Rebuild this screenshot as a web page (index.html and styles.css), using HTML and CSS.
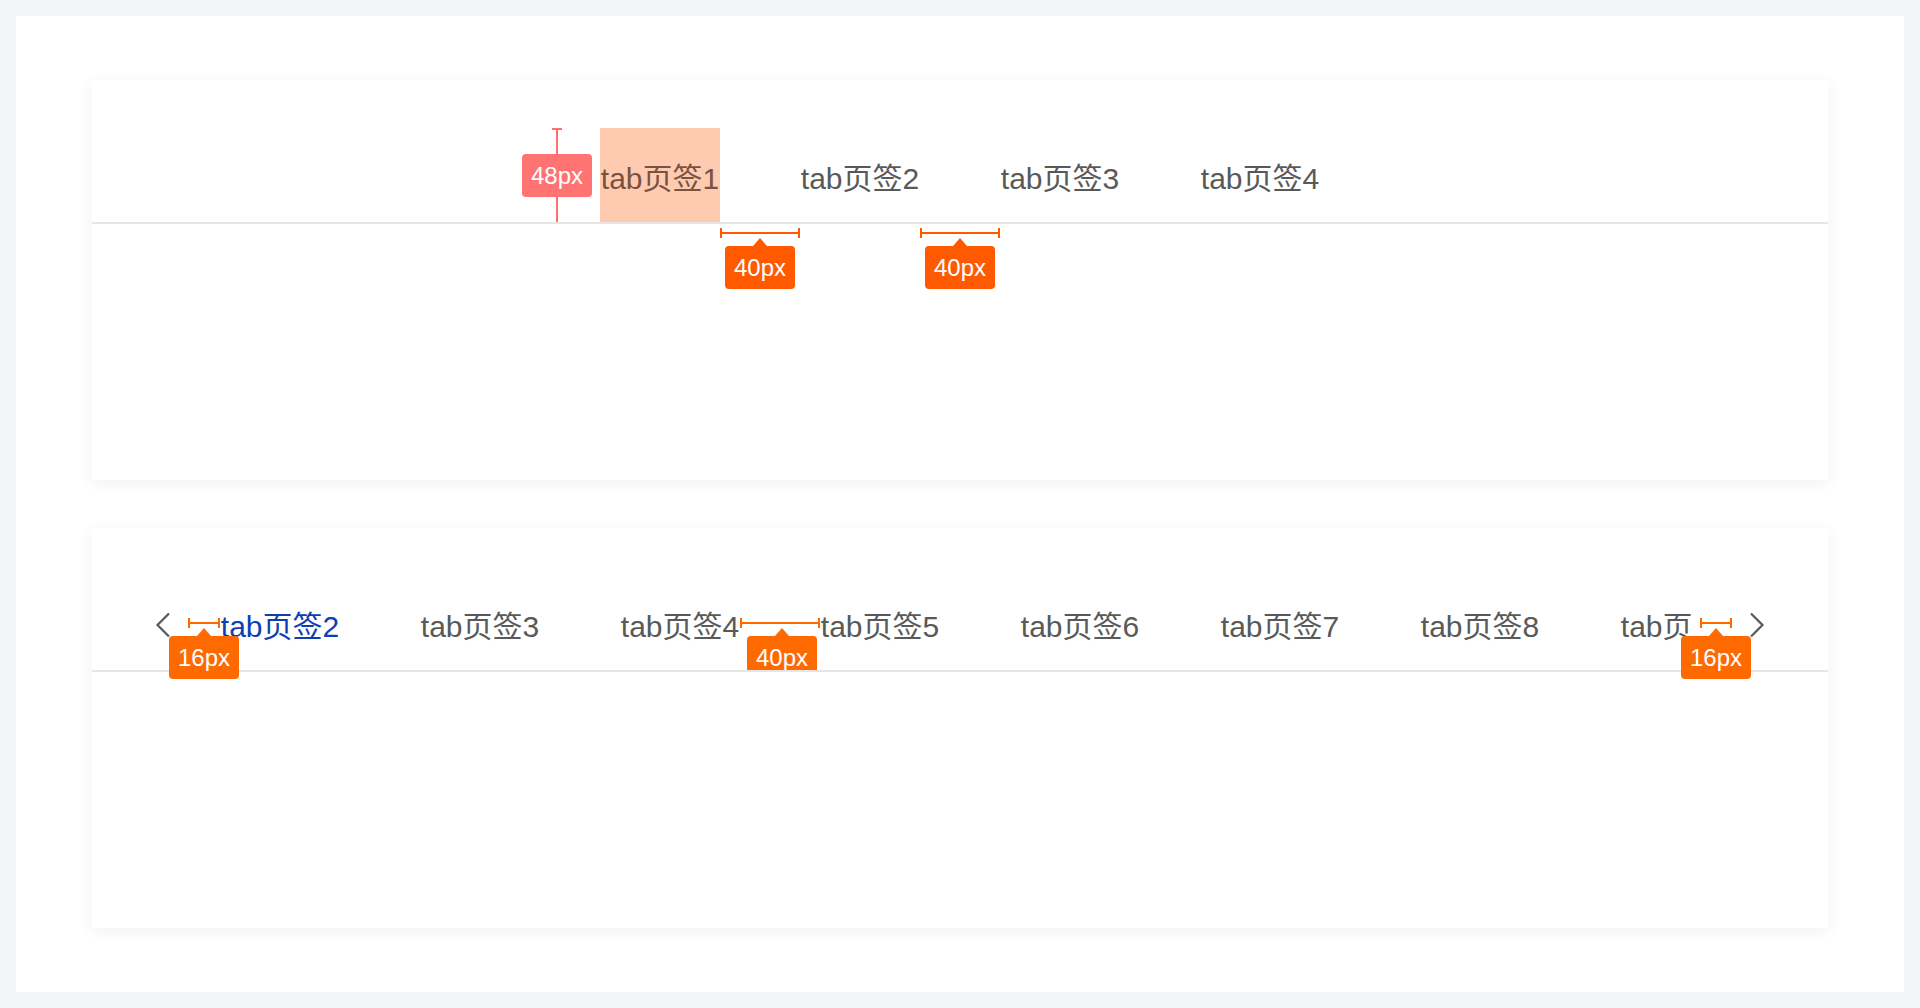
FILE: index.html
```html
<!DOCTYPE html>
<html lang="zh-CN">
<head>
<meta charset="utf-8">
<title>Tabs spec</title>
<link rel="stylesheet" href="styles.css">
</head>
<body>
<div class="page">
  <section class="card">
    <div class="tabbar tabbar-center">
      <div class="tabs">
        <div class="tab tab-hl">tab页签1
          <span class="vmark"></span>
          <span class="badge badge-red b48">48px</span>
          <span class="hmark hmark-o1 gap-mark"></span>
          <span class="badge badge-o1 gap-badge">40px</span>
        </div>
        <div class="tab">tab页签2
          <span class="hmark hmark-o1 gap-mark"></span>
          <span class="badge badge-o1 gap-badge">40px</span>
        </div>
        <div class="tab">tab页签3</div>
        <div class="tab">tab页签4</div>
      </div>
    </div>
  </section>

  <section class="card">
    <div class="tabbar tabbar-scroll">
      <div class="arrow arrow-left">
        <svg width="16" height="26" viewBox="0 0 16 26"><path d="M14 1.5 L2.5 13 L14 24.5" fill="none" stroke="#595959" stroke-width="2.2"/></svg>
        <span class="hmark hmark-o2 edge-mark-left"></span>
        <span class="badge badge-o2 edge-badge-left">16px</span>
      </div>
      <div class="viewport">
        <div class="tabs">
          <div class="tab tab-active">tab页签2</div>
          <div class="tab">tab页签3</div>
          <div class="tab">tab页签4
            <span class="hmark hmark-o2 gap-mark2"></span>
            <span class="badge badge-o2 gap-badge2">40px</span>
          </div>
          <div class="tab">tab页签5</div>
          <div class="tab">tab页签6</div>
          <div class="tab">tab页签7</div>
          <div class="tab">tab页签8</div>
          <div class="tab">tab页签9</div>
        </div>
      </div>
      <div class="arrow arrow-right">
        <svg width="16" height="26" viewBox="0 0 16 26"><path d="M2 1.5 L13.5 13 L2 24.5" fill="none" stroke="#595959" stroke-width="2.2"/></svg>
        <span class="hmark hmark-o2 edge-mark-right"></span>
        <span class="badge badge-o2 edge-badge-right">16px</span>
      </div>
    </div>
  </section>
</div>
</body>
</html>
```

FILE: styles.css
```css
html, body {
  margin: 0;
  padding: 0;
}
body {
  background: #f4f5f9;
  font-family: "Liberation Sans", "Noto Sans CJK SC", sans-serif;
}
.page {
  margin: 16px;
  background: #ffffff;
  padding: 64px 76px;
  display: flex;
  flex-direction: column;
  gap: 48px;
}
.card {
  height: 400px;
  box-sizing: border-box;
  padding-top: 48px;
  background: #ffffff;
  box-shadow: 0 3px 16px rgba(0, 0, 0, 0.06);
}
.tabbar {
  height: 96px;
  box-sizing: border-box;
  border-bottom: 2px solid #e6e6e6;
  display: flex;
}
.tabbar-center {
  justify-content: center;
}
.tabbar-scroll {
  padding: 0 64px;
  gap: 32px;
}
.tabs {
  display: flex;
  gap: 80px;
}
.tab {
  position: relative;
  flex: none;
  width: 120px;
  height: 94px;
  box-sizing: border-box;
  padding-top: 8px;
  line-height: 86px;
  text-align: center;
  font-size: 30px;
  color: #595959;
  white-space: nowrap;
}
.tab-hl {
  background: #ffcbb0;
  color: #7a5240;
}
.tab-active {
  color: #0d3fb3;
}
.viewport {
  flex: 1;
  overflow: hidden;
  margin-right: 7px;
}
.arrow {
  position: relative;
  flex: none;
  width: 32px;
  height: 94px;
  display: flex;
  align-items: center;
}
.arrow svg {
  display: block;
  margin-top: 3px;
}
.arrow-left {
  justify-content: flex-start;
}
.arrow-left svg {
  margin-left: -1px;
}
.arrow-right {
  justify-content: flex-end;
}
.arrow-right svg {
  margin-right: -1px;
}

/* measurement marks */
.vmark {
  position: absolute;
  left: -44px;
  top: 0;
  width: 2px;
  height: 94px;
  background: #ff7070;
}
.vmark::before {
  content: "";
  position: absolute;
  left: -4px;
  top: 0;
  width: 10px;
  height: 2px;
  background: #ff7070;
}
.hmark {
  position: absolute;
  height: 10px;
  box-sizing: border-box;
  border-left: 2px solid currentColor;
  border-right: 2px solid currentColor;
}
.hmark::before {
  content: "";
  position: absolute;
  left: 0;
  right: 0;
  top: 4px;
  height: 2px;
  background: currentColor;
}
.hmark-o1 { color: #ff5a00; }
.hmark-o2 { color: #ff6a00; }

.badge {
  position: absolute;
  width: 70px;
  height: 43px;
  line-height: 44px;
  border-radius: 4px;
  text-align: center;
  font-family: "Liberation Sans", sans-serif;
  font-size: 24px;
  color: #ffffff;
  z-index: 2;
}
.badge-o1::before, .badge-o2::before {
  content: "";
  position: absolute;
  left: 50%;
  bottom: 100%;
  margin-left: -7px;
  border-left: 7px solid transparent;
  border-right: 7px solid transparent;
  border-bottom: 8px solid transparent;
}
.badge-red {
  background: #ff7373;
}
.badge-o1 {
  background: #ff5a00;
}
.badge-o1::before { border-bottom-color: #ff5a00; }
.badge-o2 {
  background: #ff6a00;
}
.badge-o2::before { border-bottom-color: #ff6a00; }

.b48 {
  left: -78px;
  top: 26px;
}
.gap-mark {
  left: 120px;
  width: 80px;
  top: 100px;
}
.gap-badge {
  left: 125px;
  top: 118px;
}
.gap-mark2 {
  left: 120px;
  width: 80px;
  top: 42px;
}
.gap-badge2 {
  left: 127px;
  top: 60px;
  z-index: 3;
}
.edge-mark-left {
  left: 32px;
  width: 32px;
  top: 42px;
}
.edge-badge-left {
  left: 13px;
  top: 60px;
}
.edge-mark-right {
  left: -32px;
  width: 32px;
  top: 42px;
}
.edge-badge-right {
  left: -51px;
  top: 60px;
}
```
